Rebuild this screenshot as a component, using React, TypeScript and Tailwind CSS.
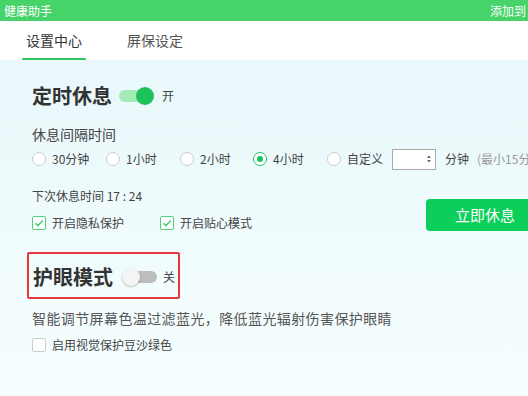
import React from 'react';

const font = { fontFamily: '"Noto Sans CJK SC", "Noto Sans", sans-serif' };

function Radio({ label, checked }: { label: string; checked?: boolean }) {
  return (
    <div className="flex items-center gap-[6px] shrink-0 whitespace-nowrap">
      <span
        className={
          'w-[14px] h-[14px] rounded-full border bg-white flex items-center justify-center ' +
          (checked ? 'border-[#22c55e] border-[1.5px]' : 'border-[#c8cdd0]')
        }
      >
        {checked && <span className="w-[6px] h-[6px] rounded-full bg-[#16c45a]" />}
      </span>
      <span className="text-[12px] text-[#444]">{label}</span>
    </div>
  );
}

function Check({ label, checked }: { label: string; checked?: boolean }) {
  return (
    <div className="flex items-center gap-[6px] whitespace-nowrap">
      <span
        className={
          'w-[14px] h-[14px] rounded-[2px] border bg-white flex items-center justify-center ' +
          (checked ? 'border-[#4fd07a]' : 'border-[#c8cdd0]')
        }
      >
        {checked && (
          <svg width="10" height="10" viewBox="0 0 10 10">
            <path d="M1.5 5.2 L4 7.6 L8.6 2.6" fill="none" stroke="#22c55e" strokeWidth="1.3" />
          </svg>
        )}
      </span>
      <span className="text-[12px] text-[#444]">{label}</span>
    </div>
  );
}

export default function App(): React.JSX.Element {
  return (
    <div className="w-[528px] h-[396px] overflow-hidden flex flex-col bg-white" style={font}>
      {/* title bar */}
      <div className="h-[21px] bg-[#46d36a] flex items-center justify-between pl-[4px] pr-[2px] text-white text-[12px] leading-none">
        <span>健康助手</span>
        <span>添加到</span>
      </div>

      {/* tabs */}
      <div className="h-[39px] flex items-stretch pl-[22px] gap-[41px] bg-white">
        <div className="relative flex items-center px-[4px] text-[14px] text-[#333]">
          设置中心
          <span className="absolute left-0 right-0 bottom-[0px] h-[2px] bg-[#2fc45f] rounded" />
        </div>
        <div className="flex items-center text-[14px] text-[#555]">屏保设定</div>
      </div>

      {/* content */}
      <div className="flex-1 bg-gradient-to-b from-[#e9f8fb] to-[#f6fefe] pl-[32px] pt-[24px]">
        <div className="flex items-center h-[24px]">
          <span className="text-[20px] font-bold text-[#333] leading-none">定时休息</span>
          <span className="relative ml-[7px] w-[35px] h-[18px] flex items-center">
            <span className="w-[32px] h-[12px] rounded-full bg-[#a3ebb6]" />
            <span className="absolute right-0 w-[18px] h-[18px] rounded-full bg-[#1cc35a]" />
          </span>
          <span className="ml-[8px] text-[12px] text-[#444]">开</span>
        </div>

        <div className="mt-[16px] text-[14px] text-[#444] leading-[20px]">休息间隔时间</div>

        <div className="mt-[4px] flex items-center h-[22px] whitespace-nowrap">
          <div className="w-[74px] shrink-0"><Radio label="30分钟" /></div>
          <div className="w-[74px] shrink-0"><Radio label="1小时" /></div>
          <div className="w-[73px] shrink-0"><Radio label="2小时" /></div>
          <div className="w-[74px] shrink-0"><Radio label="4小时" checked /></div>
          <div className="w-[65px] shrink-0"><Radio label="自定义" /></div>
          <div className="shrink-0 w-[44px] h-[21px] border border-[#aaa] bg-white flex items-center justify-end pr-[3px]">
            <svg width="6" height="10" viewBox="0 0 6 10">
              <path d="M1 4 L3 1.5 L5 4 Z M1 6 L3 8.5 L5 6 Z" fill="#666" />
            </svg>
          </div>
          <span className="shrink-0 ml-[9px] text-[12px] text-[#444]">分钟</span>
          <span className="shrink-0 ml-[8px] text-[12px] text-[#999]">(最小15分钟)</span>
        </div>

        <div className="flex items-start mt-[17px]">
          <div className="flex flex-col">
            <div className="text-[12px] text-[#444] leading-[18px]">下次休息时间 17 : 24</div>
            <div className="mt-[9px] flex items-center">
              <div className="w-[128px]"><Check label="开启隐私保护" checked /></div>
              <Check label="开启贴心模式" checked />
            </div>
          </div>
          <button className="ml-auto mt-[12px] -mr-[16px] w-[118px] h-[32px] rounded-[4px] bg-[#0ccf5b] text-white text-[15px] shrink-0">
            立即休息
          </button>
        </div>

        <div className="mt-[20px] -ml-[5px] w-[153px] h-[47px] border-2 border-[#e5393b] rounded-[2px] flex items-center pl-[4px] pt-[2px]">
          <span className="text-[20px] font-bold text-[#333] leading-none">护眼模式</span>
          <span className="relative ml-[9px] w-[35px] h-[18px] flex items-center">
            <span className="ml-[3px] w-[32px] h-[12px] rounded-full bg-[#bdbdbd]" />
            <span className="absolute left-0 w-[18px] h-[18px] rounded-full bg-[#f4f4f4] shadow-[0_1px_2px_rgba(0,0,0,0.25)]" />
          </span>
          <span className="ml-[6px] text-[12px] text-[#444]">关</span>
        </div>

        <div className="mt-[9px] text-[14px] tracking-[0.4px] text-[#555] leading-[20px]">
          智能调节屏幕色温过滤蓝光，降低蓝光辐射伤害保护眼睛
        </div>

        <div className="mt-[8px]">
          <Check label="启用视觉保护豆沙绿色" />
        </div>
      </div>
    </div>
  );
}
